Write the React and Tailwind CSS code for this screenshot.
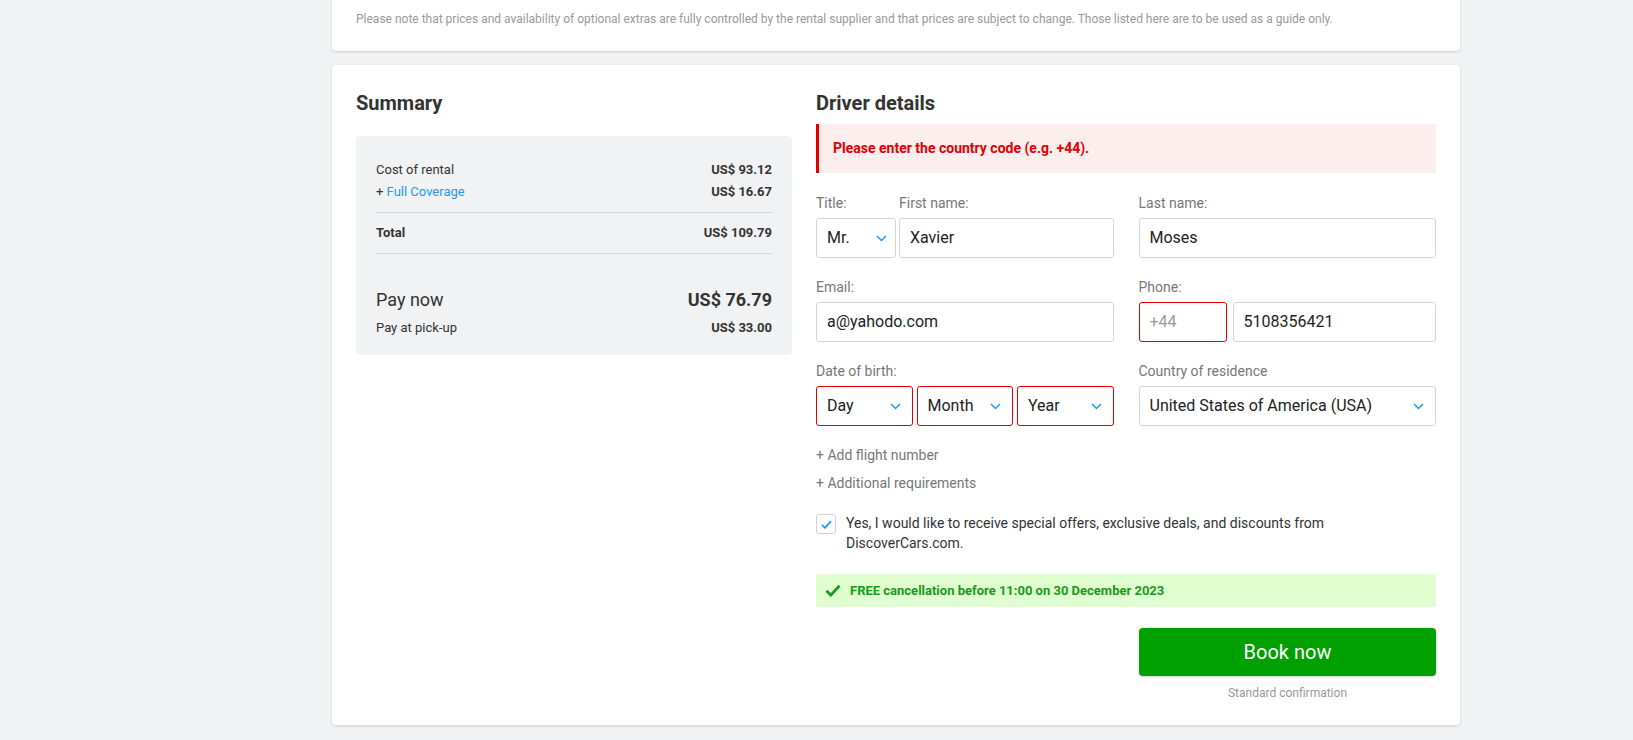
import React, { useState } from "react";

const font = { fontFamily: "Roboto, 'Liberation Sans', sans-serif" };

const Chevron = () => (
    <svg width="11" height="7" viewBox="0 0 11 7" fill="none" className="shrink-0">
        <path d="M1 1l4.5 4.5L10 1" stroke="#1a9bfc" strokeWidth="1.5" />
    </svg>
);

const Field = ({ value, placeholder, error, className = "" }) => (
    <div
        className={`h-10 flex items-center px-[10px] rounded-[3px] border bg-white text-[16px] ${error ? "border-[#e00000]" : "border-[#d3d5d8]"
            } ${className}`}
    >
        {value ? (
            <span className="text-[#222]">{value}</span>
        ) : (
            <span className="text-[#9a9a9a]">{placeholder}</span>
        )}
    </div>
);

const Select = ({ value, error, className = "pr-[11px]" }) => (
    <div
        className={`h-10 flex items-center justify-between pl-[10px] rounded-[3px] border bg-white text-[16px] text-[#222] ${error ? "border-[#e00000]" : "border-[#d3d5d8]"
            } ${className}`}
    >
        <span>{value}</span>
        <Chevron />
    </div>
);

const Label = ({ children }) => (
    <div className="text-[14px] leading-5 text-[#777] mb-[5px]">{children}</div>
);

const SummaryRow = ({ label, value, bold }) => (
    <div className="flex justify-between items-center h-[22px] text-[13px]">
        <span className={bold ? "font-bold text-[#333]" : "text-[#333]"}>{label}</span>
        <span className="font-bold text-[#333]">{value}</span>
    </div>
);

export default function App() {
    const [offers, setOffers] = useState(true);

    return (
        <div className="min-h-[740px] bg-[#f1f2f4] pl-[332px]" style={font}>
            {/* extras note */}
            <div className="w-[1128px] bg-white rounded-b shadow-[0_1px_3px_rgba(0,0,0,0.15)] px-6 pt-[11px] pb-[24px]">
                <p className="text-[12px] leading-4 text-[#999]">
                    Please note that prices and availability of optional extras are fully controlled by the rental supplier
                    and that prices are subject to change. Those listed here are to be used as a guide only.
                </p>
            </div>

            <div className="w-[1128px] mt-[14px] bg-white rounded shadow-[0_1px_3px_rgba(0,0,0,0.15)] px-6 pt-6 pb-[24px] flex gap-6">
                {/* Summary */}
                <div className="w-[436px] shrink-0">
                    <h2 className="text-[20px] leading-7 font-bold text-[#333] mb-[19px]">Summary</h2>
                    <div className="bg-[#f1f2f4] rounded px-5 pt-[23px] pb-[16px]">
                        <SummaryRow label="Cost of rental" value="US$ 93.12" />
                        <div className="flex justify-between items-center h-[22px] text-[13px]">
                            <span className="text-[#333]">
                                + <span className="text-[#1a9bfc]">Full Coverage</span>
                            </span>
                            <span className="font-bold text-[#333]">US$ 16.67</span>
                        </div>
                        <div className="mt-[9px] border-t border-[#d5d7db] pt-[9px] pb-[9px]">
                            <SummaryRow label="Total" value="US$ 109.79" bold />
                        </div>
                        <div className="border-t border-[#d5d7db] pt-[32px]">
                            <div className="flex justify-between items-center h-[26px]">
                                <span className="text-[18px] text-[#333]">Pay now</span>
                                <span className="text-[18px] font-bold text-[#333]">US$ 76.79</span>
                            </div>
                            <div className="mt-[5px]">
                                <SummaryRow label="Pay at pick-up" value="US$ 33.00" />
                            </div>
                        </div>
                    </div>
                </div>

                {/* Driver details */}
                <div className="flex-1">
                    <h2 className="text-[20px] leading-7 font-bold text-[#333] mb-[7px]">Driver details</h2>
                    <div className="h-[49px] flex items-center bg-[#fdeeee] border-l-[3px] border-[#e00000] pl-[14px]">
                        <span className="text-[14px] font-bold text-[#e00000]">
                            Please enter the country code (e.g. +44).
                        </span>
                    </div>

                    <div className="grid grid-cols-2 gap-x-[25px] gap-y-[19px] mt-5">
                        <div className="flex gap-[3px]">
                            <div className="w-[80px]">
                                <Label>Title:</Label>
                                <Select value="Mr." className="pr-[8px]" />
                            </div>
                            <div className="flex-1">
                                <Label>First name:</Label>
                                <Field value="Xavier" />
                            </div>
                        </div>
                        <div>
                            <Label>Last name:</Label>
                            <Field value="Moses" />
                        </div>

                        <div>
                            <Label>Email:</Label>
                            <Field value="a@yahodo.com" />
                        </div>
                        <div>
                            <Label>Phone:</Label>
                            <div className="flex gap-[6px]">
                                <Field placeholder="+44" error className="w-[88px]" />
                                <Field value="5108356421" className="flex-1" />
                            </div>
                        </div>

                        <div>
                            <Label>Date of birth:</Label>
                            <div className="grid grid-cols-3 gap-1">
                                <Select value="Day" error />
                                <Select value="Month" error />
                                <Select value="Year" error />
                            </div>
                        </div>
                        <div>
                            <Label>Country of residence</Label>
                            <Select value="United States of America (USA)" />
                        </div>
                    </div>

                    <div className="mt-[19px] text-[14px] leading-5 text-[#777]">
                        <div>+ Add flight number</div>
                        <div className="mt-2">+ Additional requirements</div>
                    </div>

                    <label className="flex items-start gap-[10px] mt-[20px] cursor-pointer">
                        <span
                            onClick={() => setOffers(!offers)}
                            className="w-5 h-5 mt-[1px] shrink-0 flex items-center justify-center bg-white border border-[#cfd2d6] rounded-[3px]"
                        >
                            {offers && (
                                <svg width="11" height="9" viewBox="0 0 11 9" fill="none">
                                    <path d="M1 4.8l3 3L10 1.2" stroke="#1a9bfc" strokeWidth="1.8" />
                                </svg>
                            )}
                        </span>
                        <span className="text-[14px] leading-5 text-[#333]">
                            Yes, I would like to receive special offers, exclusive deals, and discounts from DiscoverCars.com.
                        </span>
                    </label>

                    <div className="mt-[21px] h-[33px] flex items-center gap-[9px] pl-[9px] bg-[#e0fdd0] rounded-[3px]">
                        <svg width="16" height="13" viewBox="0 0 16 13" fill="none">
                            <path d="M1.5 6.8l4.3 4.3L14.5 1.8" stroke="#1a9a1a" strokeWidth="2.8" />
                        </svg>
                        <span className="text-[13px] font-bold text-[#1a9a1a]">
                            FREE cancellation before 11:00 on 30 December 2023
                        </span>
                    </div>

                    <div className="flex justify-end mt-[21px]">
                        <div className="w-[297px] flex flex-col items-center">
                            <button className="w-full h-12 rounded bg-[#00a000] text-white text-[20px] shadow-[0_1px_3px_rgba(0,0,0,0.2)]">
                                Book now
                            </button>
                            <span className="mt-[9px] text-[12px] leading-4 text-[#999]">Standard confirmation</span>
                        </div>
                    </div>
                </div>
            </div>
        </div>
    );
}
